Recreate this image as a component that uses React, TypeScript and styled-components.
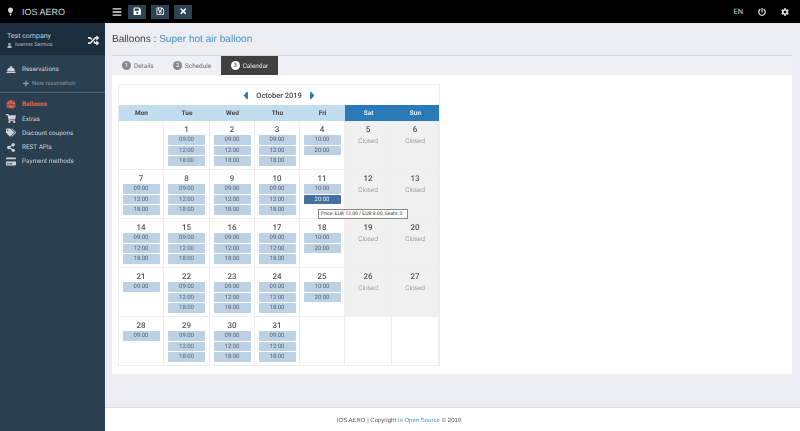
import { createGlobalStyle, styled } from "styled-components";
import {
  FaBars, FaSave, FaRegSave, FaTimes, FaPowerOff, FaCog, FaRandom, FaUser, FaConciergeBell,
  FaPlus, FaShoppingCart, FaTags, FaShareAlt, FaCreditCard, FaCaretLeft, FaCaretRight,
} from "react-icons/fa";

const Global = createGlobalStyle`
  html, body { margin: 0; padding: 0; height: 100%; }
  body {
    font-family: "Roboto", "Liberation Sans", sans-serif;
    background: #ebedf2;
    overflow: hidden;
    text-rendering: geometricPrecision;
  }
  * { box-sizing: border-box; }
`;

const Page = styled.div`
  width: 800px;
  height: 431px;
  display: flex;
  flex-direction: column;
  will-change: opacity;
`;

const TopBar = styled.header`
  height: 23px;
  flex: none;
  background: #000;
  display: flex;
  align-items: center;
  color: #fff;
`;
const Brand = styled.div`
  width: 105px;
  display: flex;
  align-items: center;
  padding-left: 8px;
  gap: 9px;
  font-family: "Liberation Sans", sans-serif;
  font-size: 9px;
  color: #d4d8dc;
`;
const Tools = styled.div`
  display: flex;
  align-items: center;
  gap: 5px;
  padding-left: 7px;
  flex: 1;
`;
const ToolButton = styled.button`
  width: 18px;
  height: 14px;
  border: 0;
  padding: 0;
  background: #2d4252;
  color: #fff;
  display: flex;
  align-items: center;
  justify-content: center;
  font-size: 8.5px;
`;
const MenuToggle = styled.span`
  display: flex;
  font-size: 10px;
  margin-right: 1px;
  width: 10px;
  color: #e8e8e8;
`;
const Status = styled.div`
  display: flex;
  align-items: center;
  gap: 15px;
  padding-right: 11px;
  font-size: 7.5px;
  color: #d8d8d8;
`;

const Body = styled.div`
  flex: 1;
  display: flex;
  min-height: 0;
`;

const Sidebar = styled.aside`
  width: 105px;
  flex: none;
  background: #2a3f50;
`;
const Company = styled.div`
  height: 32px;
  background: #1c2e3b;
  padding: 2px 6px 0 7px;
  display: flex;
  justify-content: space-between;
  align-items: center;
`;
const CompanyName = styled.div`
  font-size: 7px;
  color: #c9cfd4;
  line-height: 10px;
`;
const CompanyUser = styled.div`
  font-size: 5.5px;
  color: #aeb6bc;
  display: flex;
  align-items: center;
  gap: 3px;
  line-height: 9px;
`;
const NavGroup = styled.ul<{ $line?: boolean }>`
  list-style: none;
  margin: 0;
  padding: ${(p) => (p.$line ? "7px 0 2px" : "4px 0 0")};
  border-bottom: ${(p) => (p.$line ? "1px solid #50626f" : "none")};
`;
const NavItem = styled.li<{ $active?: boolean; $sub?: boolean }>`
  height: 14.2px;
  display: flex;
  align-items: center;
  gap: ${(p) => (p.$sub ? "3px" : "6px")};
  padding-left: ${(p) => (p.$sub ? "23px" : "6px")};
  font-size: ${(p) => (p.$sub ? "6px" : "6.4px")};
  font-weight: ${(p) => (p.$active ? 700 : 400)};
  color: ${(p) => (p.$active ? "#e8674a" : p.$sub ? "#8a99a4" : "#ccd2d7")};
  svg { width: ${(p) => (p.$sub ? "6px" : "10px")}; height: 9px; flex: none; }
`;

const Content = styled.main`
  flex: 1;
  display: flex;
  flex-direction: column;
  min-width: 0;
`;
const Inner = styled.div`
  flex: 1;
  padding: 0 8px 0 7px;
`;
const Title = styled.h1`
  margin: 0;
  height: 33px;
  border-bottom: 1px solid #d3d6da;
  font-family: "Liberation Sans", sans-serif;
  font-weight: 400;
  font-size: 10.1px;
  line-height: 34px;
  color: #444;
  span { color: #4a8fc0; }
`;
const Tabs = styled.div`
  display: flex;
  height: 19px;
  background: #eff0f3;
`;
const Tab = styled.div<{ $active?: boolean }>`
  display: flex;
  align-items: center;
  gap: 3px;
  padding: 0 9.5px 0 10px;
  font-size: 6.4px;
  color: ${(p) => (p.$active ? "#e8e8e8" : "#666")};
  background: ${(p) => (p.$active ? "#3f3f3f" : "transparent")};
`;
const TabNumber = styled.span<{ $active?: boolean }>`
  width: 9px;
  height: 9px;
  border-radius: 50%;
  background: ${(p) => (p.$active ? "#fff" : "#888")};
  color: ${(p) => (p.$active ? "#3f3f3f" : "#fff")};
  font-size: 6px;
  display: flex;
  align-items: center;
  justify-content: center;
`;
const Panel = styled.section`
  background: #fff;
  height: 299px;
  padding: 9px 7px;
`;

const Calendar = styled.div`
  position: relative;
  width: 320px;
  border-top: 1px solid #eeeeee;
  box-shadow: -1px 0 0 #eeeeee, 1px 0 0 #eeeeee;
`;
const MonthRow = styled.div`
  height: 20px;
  display: flex;
  align-items: center;
  justify-content: center;
  gap: 6px;
  font-size: 7.5px;
  font-weight: 500;
  color: #444;
  svg { color: #2a7ab8; width: 9px; height: 13px; }
`;
const Week = styled.div`
  display: grid;
  grid-template-columns: 45px 46px 45px 45px 45px 47px 47px;
`;
const DayName = styled.div<{ $weekend?: boolean }>`
  height: 16px;
  display: flex;
  align-items: center;
  justify-content: center;
  font-size: 6.5px;
  font-weight: 700;
  color: ${(p) => (p.$weekend ? "#e3edf5" : "#444")};
  background: ${(p) => (p.$weekend ? "#2a7ab8" : "#c1dbef")};
`;
const Day = styled.div<{ $closed?: boolean }>`
  height: 49px;
  padding: 4px 3px 0;
  border-right: 1px solid #eeeeee;
  border-bottom: 1px solid #eeeeee;
  background: ${(p) => (p.$closed ? "#f0f0f0" : "#fff")};
  display: flex;
  flex-direction: column;
  align-items: center;
`;
const DayNumber = styled.div`
  font-size: 8px;
  font-weight: 500;
  color: #555;
  line-height: 9px;
  height: 9px;
`;
const ClosedLabel = styled.div`
  font-size: 6.5px;
  font-weight: 300;
  color: #777;
  margin-top: 3px;
  line-height: 9px;
`;
const Slot = styled.div<{ $hover?: boolean }>`
  width: 37px;
  height: 9.5px;
  margin-top: 1px;
  border-radius: 1px;
  background: ${(p) => (p.$hover ? "#44719e" : "#bdd1e5")};
  color: ${(p) => (p.$hover ? "#dfe8f0" : "#5a6570")};
  font-size: 6px;
  line-height: 9.5px;
  text-align: center;
`;
const Tooltip = styled.div`
  position: absolute;
  left: 199px;
  top: 124px;
  height: 10px;
  width: 90px;
  padding: 0 2px;
  background: #fff;
  border: 1px solid #888;
  font-size: 5px;
  line-height: 8px;
  white-space: nowrap;
  color: #333;
  z-index: 2;
`;

const Footer = styled.footer`
  height: 24px;
  flex: none;
  background: #fff;
  border-top: 1px solid #dcdcdc;
  display: flex;
  align-items: center;
  justify-content: center;
  padding: 2px 107px 0 0;
  font-family: "Liberation Sans", sans-serif;
  font-size: 6px;
  color: #555;
  a { color: #4a8fc0; margin: 0 2px; }
`;

type DayData = { n?: number; slots?: string[]; closed?: boolean };

const A = ["09:00", "12:00", "18:00"];
const B = ["10:00", "20:00"];
const C = ["09:00"];
const c = (n: number): DayData => ({ n, closed: true });
const d = (n: number, slots: string[]): DayData => ({ n, slots });

const weeks: DayData[][] = [
  [{}, d(1, A), d(2, A), d(3, A), d(4, B), c(5), c(6)],
  [d(7, A), d(8, A), d(9, A), d(10, A), d(11, B), c(12), c(13)],
  [d(14, A), d(15, A), d(16, A), d(17, A), d(18, B), c(19), c(20)],
  [d(21, C), d(22, A), d(23, A), d(24, A), d(25, B), c(26), c(27)],
  [d(28, C), d(29, A), d(30, A), d(31, A), {}, {}, {}],
];
const dayNames = ["Mon", "Tue", "Wed", "Thu", "Fri", "Sat", "Sun"];

// small balloon for the top bar logo
const LogoBalloon = () => (
  <svg viewBox="0 0 10 16" width={5} height={9} fill="#d4d8dc">
    <path d="M5 0C2 0 0 2 0 5c0 2.5 2 4.500 3.500 6.500h3C8 9.500 10 7.500 10 5c0-3-2-5-5-5z" />
    <rect x="3.500" y="12.500" width="3" height="3.500" rx="0.5" />
  </svg>
);

// striped hot air balloon for the nav
const BalloonStriped = () => (
  <svg viewBox="0 0 20 18" fill="#e8674a">
    <path d="M10 0.500C5.500 0.500 1 4.500 1 10c0 3 1.500 5 3.500 6.500h11C17.500 15 19 13 19 10c0-5.500-4.500-9.500-9-9.500z" />
    <path d="M6 2.500L10 10l4-7.500M3 10l4 6.500M17 10l-4 6.500M2 9.500h16" fill="none" stroke="#2a3f50" strokeWidth="1.200" />
  </svg>
);

export default function App() {
  return (
    <Page>
      <Global />
      <TopBar>
        <Brand>
          <LogoBalloon />
          IOS AERO
        </Brand>
        <Tools>
          <MenuToggle><FaBars /></MenuToggle>
          <ToolButton><FaSave /></ToolButton>
          <ToolButton><FaRegSave /></ToolButton>
          <ToolButton><FaTimes /></ToolButton>
        </Tools>
        <Status>
          <span>EN</span>
          <FaPowerOff size={8} />
          <FaCog size={8} />
        </Status>
      </TopBar>
      <Body>
        <Sidebar>
          <Company>
            <div>
              <CompanyName>Test company</CompanyName>
              <CompanyUser><FaUser size={5} /> Ioannis Samios</CompanyUser>
            </div>
            <FaRandom size={11} color="#e6eaed" />
          </Company>
          <NavGroup $line>
            <NavItem><FaConciergeBell /> Reservations</NavItem>
            <NavItem $sub><FaPlus /> New reservation</NavItem>
          </NavGroup>
          <NavGroup>
            <NavItem $active><BalloonStriped /> Balloons</NavItem>
            <NavItem><FaShoppingCart /> Extras</NavItem>
            <NavItem><FaTags /> Discount coupons</NavItem>
            <NavItem><FaShareAlt /> REST APIs</NavItem>
            <NavItem><FaCreditCard /> Payment methods</NavItem>
          </NavGroup>
        </Sidebar>
        <Content>
          <Inner>
            <Title>Balloons : <span>Super hot air balloon</span></Title>
            <Tabs>
              <Tab><TabNumber>1</TabNumber> Details</Tab>
              <Tab><TabNumber>2</TabNumber> Schedule</Tab>
              <Tab $active><TabNumber $active>3</TabNumber> Calendar</Tab>
            </Tabs>
            <Panel>
              <Calendar>
                <MonthRow>
                  <FaCaretLeft /> October 2019 <FaCaretRight />
                </MonthRow>
                <Week>
                  {dayNames.map((name, i) => (
                    <DayName key={name} $weekend={i > 4}>{name}</DayName>
                  ))}
                </Week>
                {weeks.map((week, w) => (
                  <Week key={w}>
                    {week.map((day, i) => (
                      <Day key={i} $closed={day.closed}>
                        <DayNumber>{day.n}</DayNumber>
                        {day.closed && <ClosedLabel>Closed</ClosedLabel>}
                        {day.slots?.map((s) => (
                          <Slot key={s} $hover={day.n === 11 && s === "20:00"}>{s}</Slot>
                        ))}
                      </Day>
                    ))}
                  </Week>
                ))}
                <Tooltip>Price: EUR 12.00 / EUR 8.00, Seats: 5</Tooltip>
              </Calendar>
            </Panel>
          </Inner>
          <Footer>
            IOS AERO | Copyright <a>Is Open Source</a> © 2019
          </Footer>
        </Content>
      </Body>
    </Page>
  );
}
